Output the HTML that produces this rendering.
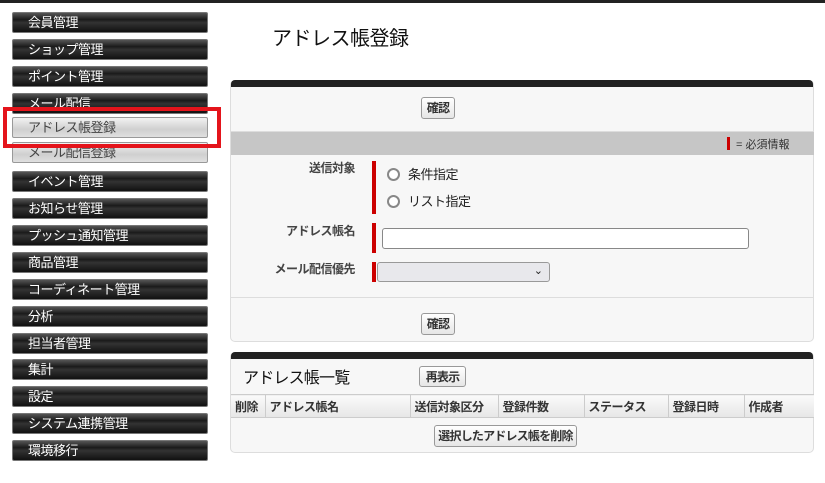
<!DOCTYPE html>
<html><head><meta charset="utf-8"><style>
*{box-sizing:border-box;margin:0;padding:0}
body{width:825px;height:483px;background:#fff;font-family:"Liberation Sans","Noto Sans CJK JP",sans-serif;position:relative;overflow:hidden;color:#222;white-space:nowrap}
.top{position:absolute;left:0;top:0;width:825px;height:3px;background:#222}
.nb{position:absolute;left:12px;width:196px;height:21px;border:1px solid #777;border-radius:2px;background:linear-gradient(#555 0%,#1a1a1a 35%,#333 50%,#111 100%);color:#fff;font-size:13px;line-height:19px;padding-left:15px;letter-spacing:-0.5px}
.nb.g{background:linear-gradient(#f2f2f2,#cfcfcf 60%,#e0e0e0);color:#444;border-color:#999}
.red{position:absolute;left:3px;top:107px;width:218px;height:41px;border:4px solid #e4141b}
h1{position:absolute;left:272px;top:22px;font-size:20px;font-weight:normal;color:#111;letter-spacing:-0.5px}
.panel{position:absolute;left:230px;width:584px;background:#f7f7f7;border:1px solid #ddd;border-top:none;border-radius:5px}
.bar{height:7px;background:#222;border-radius:4px 4px 0 0}
.btn{position:absolute;height:22px;border:1px solid #999;border-radius:3px;background:linear-gradient(#fff,#e6e6e6);font-size:12px;font-weight:bold;line-height:20px;text-align:center;color:#333;letter-spacing:-0.8px;overflow:hidden}
.lbl{position:absolute;font-size:12px;font-weight:bold;color:#444;text-align:right;width:140px;left:215px;letter-spacing:-0.5px}
.rb{position:absolute;width:4px;background:#c00}
.rad{position:absolute;width:13px;height:13px;border:2px solid #888;border-radius:50%;background:#fff}
.rt{position:absolute;font-size:13px;color:#222;letter-spacing:-0.5px}
table{table-layout:fixed}
th{font-size:12px;font-weight:bold;color:#333;text-align:left;padding:0 4px;border-right:1px solid #ccc;background:linear-gradient(#fafafa,#e6e6e6);height:23px;white-space:nowrap;overflow:hidden;letter-spacing:-0.5px}
</style></head><body>
<div class="top"></div>
<div class="nb" style="top:12px">会員管理</div>
<div class="nb" style="top:39px">ショップ管理</div>
<div class="nb" style="top:66px">ポイント管理</div>
<div class="nb" style="top:93px">メール配信</div>
<div class="nb g" style="top:117px">アドレス帳登録</div>
<div class="nb g" style="top:142px">メール配信登録</div>
<div class="nb" style="top:171px">イベント管理</div>
<div class="nb" style="top:198px">お知らせ管理</div>
<div class="nb" style="top:225px">プッシュ通知管理</div>
<div class="nb" style="top:252px">商品管理</div>
<div class="nb" style="top:279px">コーディネート管理</div>
<div class="nb" style="top:306px">分析</div>
<div class="nb" style="top:333px">担当者管理</div>
<div class="nb" style="top:359px">集計</div>
<div class="nb" style="top:386px">設定</div>
<div class="nb" style="top:413px">システム連携管理</div>
<div class="nb" style="top:440px">環境移行</div>
<div class="red"></div>
<h1>アドレス帳登録</h1>
<div class="panel" style="top:80px;height:262px"><div class="bar"></div>
<div style="position:absolute;left:0;top:51px;width:583px;height:24px;background:#c6c6c6;border-top:1px solid #ddd"></div>
<div style="position:absolute;left:496px;top:57px;width:3px;height:13px;background:#c00"></div>
<div style="position:absolute;left:505px;top:56px;font-size:11px;color:#333">= 必須情報</div>
<div style="position:absolute;left:0;top:217px;width:583px;border-top:1px solid #ddd"></div>
</div>
<div class="btn" style="left:421px;top:97px;width:34px">確認</div>
<div class="lbl" style="top:159px">送信対象</div>
<div class="rb" style="left:372px;top:161px;height:53px"></div>
<div class="rad" style="left:387px;top:168px"></div><div class="rt" style="left:408px;top:164px">条件指定</div>
<div class="rad" style="left:387px;top:195px"></div><div class="rt" style="left:408px;top:191px">リスト指定</div>
<div class="lbl" style="top:222px">アドレス帳名</div>
<div class="rb" style="left:372px;top:223px;height:30px"></div>
<div style="position:absolute;left:382px;top:228px;width:367px;height:21px;border:1px solid #888;border-radius:3px;background:#fff"></div>
<div class="lbl" style="top:260px">メール配信優先</div>
<div class="rb" style="left:372px;top:262px;height:20px"></div>
<div style="position:absolute;left:377px;top:262px;width:173px;height:20px;border:1px solid #999;border-radius:3px;background:#e8e8ec;font-size:11px;text-align:right;padding-right:6px;line-height:17px">⌄</div>
<div class="btn" style="left:421px;top:313px;width:34px">確認</div>
<div class="panel" style="top:352px;height:101px"><div class="bar"></div>
<div style="position:absolute;left:12px;top:12px;font-size:16px;color:#111;letter-spacing:-0.8px">アドレス帳一覧</div>
<table style="position:absolute;left:0;top:42px;width:583px;border-collapse:collapse;border-top:1px solid #ccc;border-bottom:1px solid #ccc"><tr>
<th style="width:34px">削除</th><th style="width:145px">アドレス帳名</th><th style="width:88px">送信対象区分</th><th style="width:86px">登録件数</th><th style="width:84px">ステータス</th><th style="width:76px">登録日時</th><th style="border-right:none">作成者</th></tr></table>
</div>
<div class="btn" style="left:419px;top:366px;width:47px;height:21px">再表示</div>
<div class="btn" style="left:434px;top:425px;width:143px">選択したアドレス帳を削除</div>
</body></html>
